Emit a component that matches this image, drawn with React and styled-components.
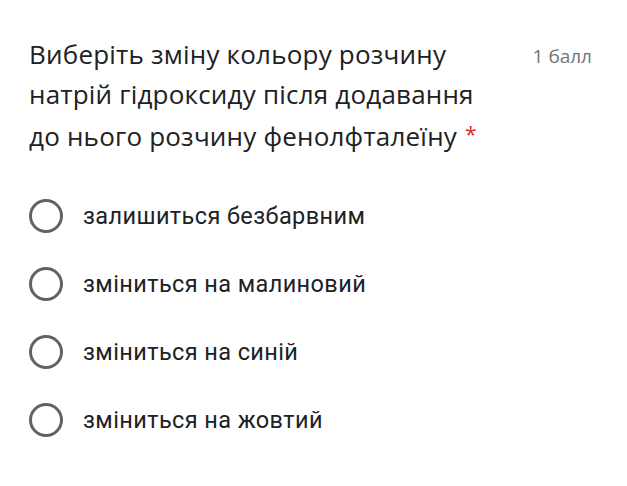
import React from 'react';
import styled, { createGlobalStyle } from 'styled-components';

const GlobalStyle = createGlobalStyle`
  html, body {
    margin: 0;
    padding: 0;
    background: #ffffff;
  }
`;

const OPTIONS = [
  'залишиться безбарвним',
  'зміниться на малиновий',
  'зміниться на синій',
  'зміниться на жовтий',
];

const Card = styled.div`
  width: 627px;
  height: 486px;
  box-sizing: border-box;
  padding: 34px 35px 0 29px;
  background: #fff;
`;

const Header = styled.div`
  display: flex;
  justify-content: space-between;
  align-items: flex-start;
`;

const Title = styled.div`
  font-family: 'Open Sans', 'Noto Sans', sans-serif;
  font-size: 26px;
  line-height: 40px;
  color: #202124;
  letter-spacing: 0.2px;
`;

const Required = styled.span`
  color: #d93025;
  font-size: 21px;
  margin-left: 8px;
  vertical-align: 4px;
`;

const Points = styled.div`
  font-family: 'Open Sans', 'Noto Sans', sans-serif;
  font-size: 19px;
  line-height: 40px;
  color: #70757a;
  padding-top: 2px;
`;

const OptionList = styled.div`
  display: flex;
  flex-direction: column;
  margin-top: 26px;
`;

const Option = styled.label`
  display: flex;
  align-items: center;
  height: 68px;
  gap: 20px;
`;

const Radio = styled.span`
  width: 28px;
  height: 28px;
  border: 3px solid #5f6368;
  border-radius: 50%;
  flex-shrink: 0;
`;

const OptionText = styled.span`
  font-family: Roboto, 'Liberation Sans', sans-serif;
  font-size: 23.5px;
  color: #202124;
  letter-spacing: 0.4px;
`;

export default function App() {
  return (
    <>
      <GlobalStyle />
      <Card>
        <Header>
          <Title>
            Виберіть зміну кольору розчину
            <br />
            натрій гідроксиду після додавання
            <br />
            до нього розчину фенолфталеїну<Required>*</Required>
          </Title>
          <Points>1 балл</Points>
        </Header>
        <OptionList>
          {OPTIONS.map((o) => (
            <Option key={o}>
              <Radio />
              <OptionText>{o}</OptionText>
            </Option>
          ))}
        </OptionList>
      </Card>
    </>
  );
}
